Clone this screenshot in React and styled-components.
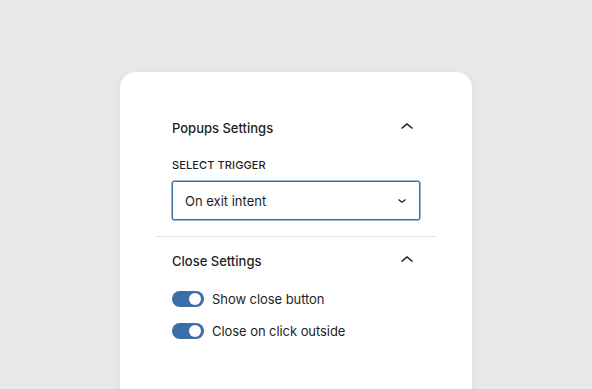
import React from 'react';
import styled, { createGlobalStyle } from 'styled-components';

const Global = createGlobalStyle`
  html, body {
    margin: 0;
    padding: 0;
    background: #e8e8e8;
    height: 100%;
    overflow: hidden;
  }
  body {
    font-family: Inter, "Noto Sans", "Liberation Sans", sans-serif;
    color: #1e1e1e;
    -webkit-font-smoothing: antialiased;
  }
`;

const Page = styled.div`
  height: 100vh;
  box-sizing: border-box;
  overflow: hidden;
  padding: 72px 120px 0;
  display: flex;
  justify-content: center;
`;

const Card = styled.div`
  width: 352px;
  height: calc(100% + 24px);
  flex-shrink: 0;
  box-sizing: border-box;
  background: #fff;
  border-radius: 16px;
  box-shadow: 0 1px 6px rgba(0, 0, 0, 0.06);
  padding: 32px 36px 0;
`;

const Section = styled.section`
  padding: 16px;
  border-top: ${(p) => (p.divided ? '1px solid #e0e0e0' : 'none')};
`;

const Header = styled.div`
  display: flex;
  align-items: center;
  justify-content: space-between;
  height: 16px;
  margin-bottom: ${(p) => p.gap}px;
`;

const Title = styled.h2`
  margin: 0;
  font-size: 13px;
  font-weight: 500;
  line-height: 16px;
`;

const Label = styled.div`
  font-size: 11px;
  font-weight: 500;
  text-transform: uppercase;
  letter-spacing: 0.01em;
  line-height: 12px;
  margin-bottom: 10px;
`;

const Select = styled.div`
  height: 39px;
  box-sizing: border-box;
  border: 1px solid #3a6ea8;
  border-radius: 2px;
  box-shadow: 0 0 0 0.5px #3a6ea8;
  display: flex;
  align-items: center;
  justify-content: space-between;
  padding: 0 12px;
  font-size: 13px;
`;

const ToggleList = styled.div`
  display: flex;
  flex-direction: column;
  gap: 12px;
`;

const ToggleRow = styled.label`
  display: flex;
  align-items: center;
  gap: 8px;
  height: 20px;
  font-size: 13px;
  letter-spacing: -0.005em;
`;

const Track = styled.span`
  width: 32px;
  height: 16px;
  border-radius: 8px;
  background: ${(p) => (p.on ? '#3a6ea8' : '#949494')};
  display: flex;
  align-items: center;
  justify-content: ${(p) => (p.on ? 'flex-end' : 'flex-start')};
  padding: 0 3px;
  box-sizing: border-box;
`;

const Knob = styled.span`
  width: 12px;
  height: 12px;
  border-radius: 50%;
  background: #fff;
`;

const ChevronUp = () => (
  <svg width="24" height="24" viewBox="0 0 24 24" style={{ marginRight: 1 }}>
    <path d="M6.5 12.5 12 8l5.5 4.5" fill="none" stroke="#1e1e1e" strokeWidth="1.6" />
  </svg>
);

const ChevronDown = () => (
  <svg width="12" height="12" viewBox="0 0 12 12" style={{ marginRight: -1 }}>
    <path d="M2.5 4.5 6 7.2l3.5-2.7" fill="none" stroke="#1e1e1e" strokeWidth="1.2" />
  </svg>
);

const Toggle = ({ label, on }) => (
  <ToggleRow>
    <Track on={on ? 1 : 0}>
      <Knob />
    </Track>
    {label}
  </ToggleRow>
);

export default function App() {
  return (
    <Page>
      <Global />
      <Card>
        <Section>
          <Header gap={23}>
            <Title>Popups Settings</Title>
            <ChevronUp />
          </Header>
          <Label>Select trigger</Label>
          <Select>
            <span>On exit intent</span>
            <ChevronDown />
          </Select>
        </Section>
        <Section divided>
          <Header gap={20}>
            <Title>Close Settings</Title>
            <ChevronUp />
          </Header>
          <ToggleList>
            <Toggle on label="Show close button" />
            <Toggle on label="Close on click outside" />
          </ToggleList>
        </Section>
      </Card>
    </Page>
  );
}
